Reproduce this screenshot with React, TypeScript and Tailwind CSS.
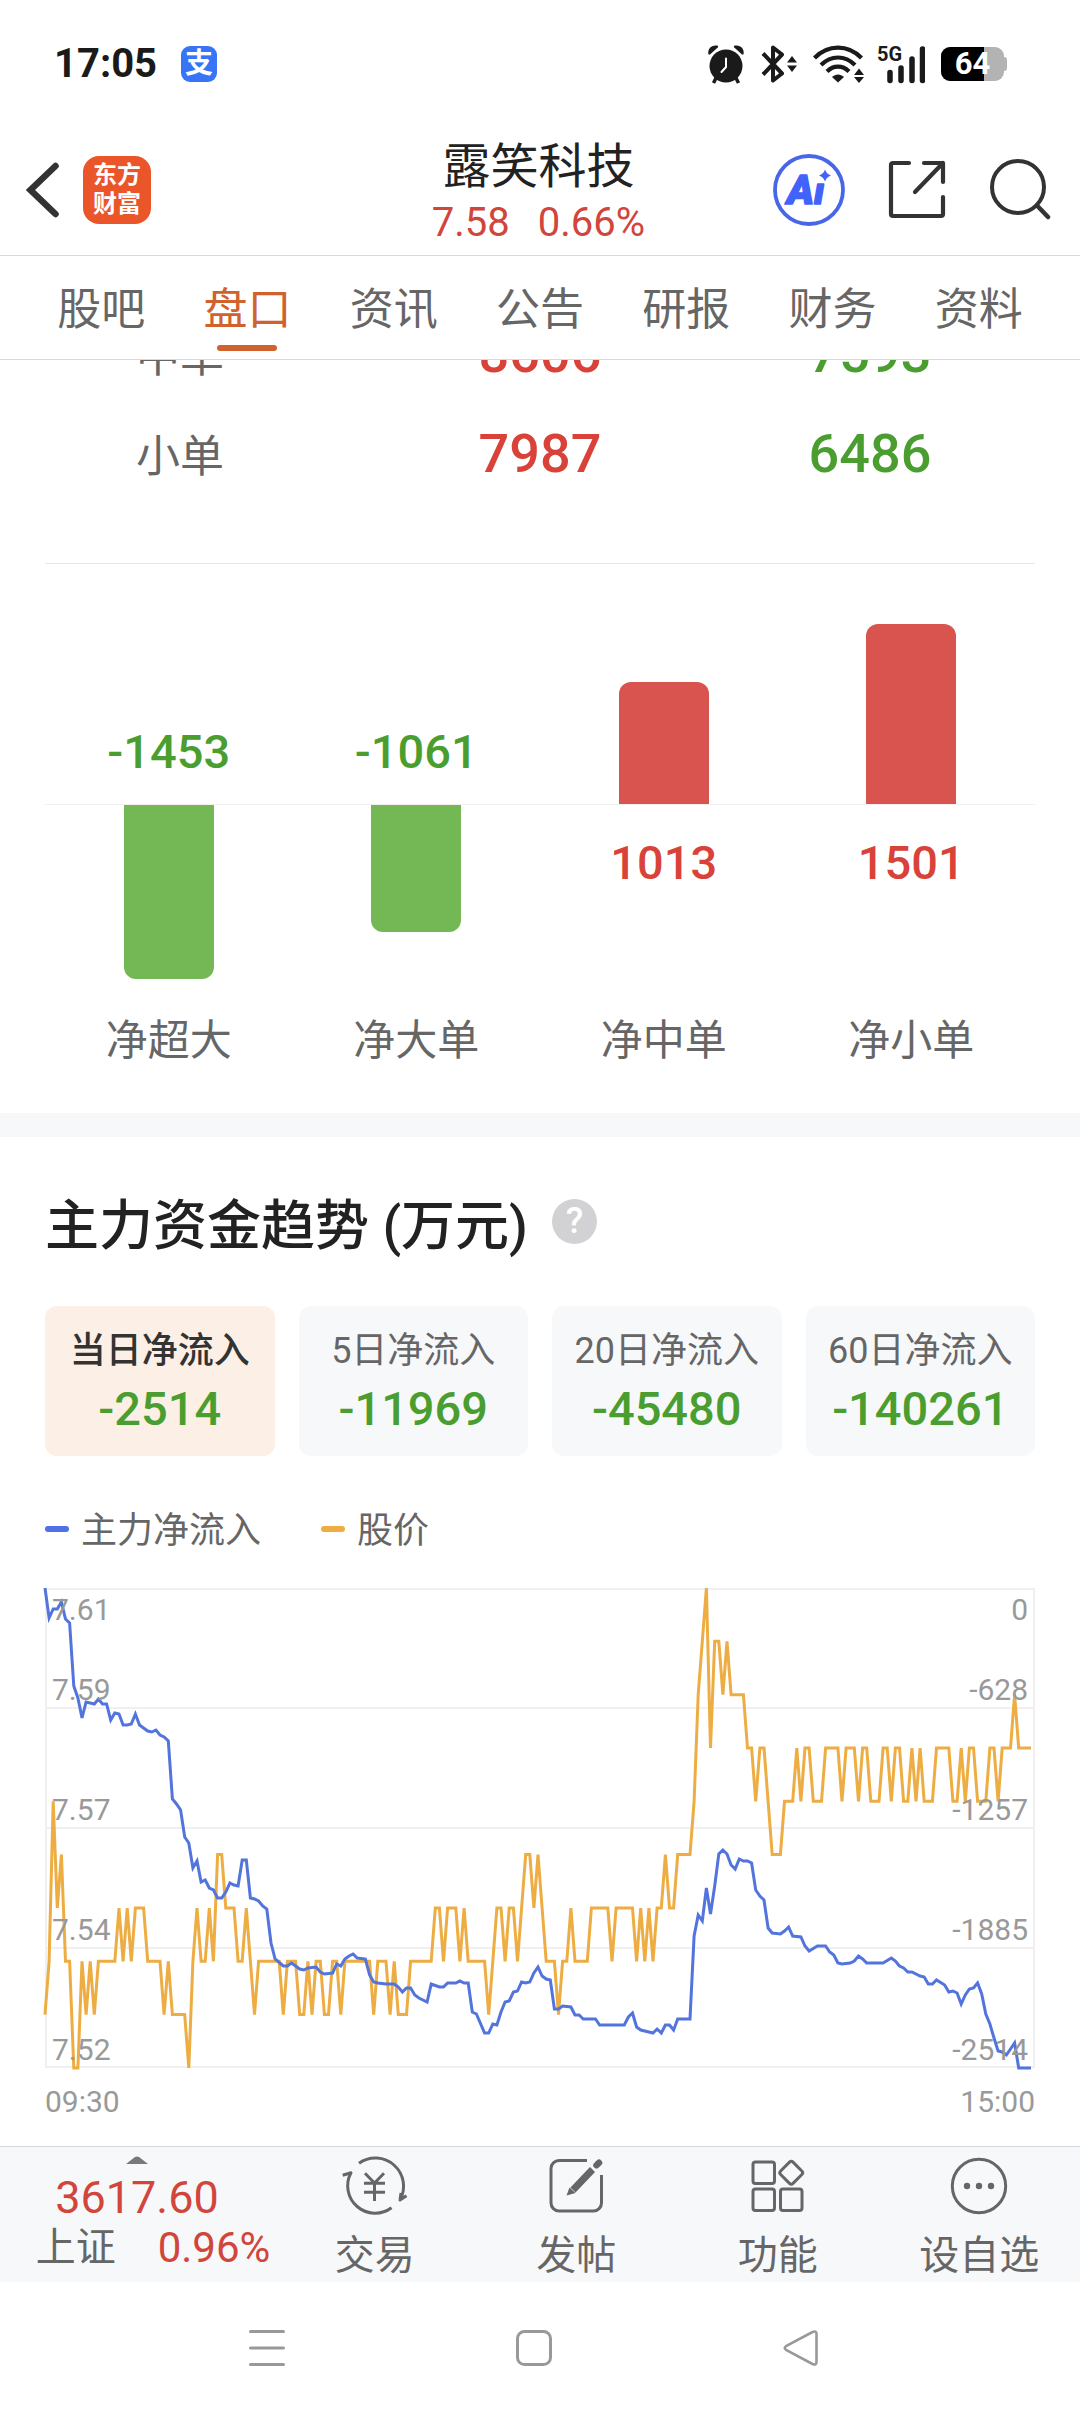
import React, { useState } from 'react';

const TABS = ['股吧', '盘口', '资讯', '公告', '研报', '财务', '资料'];

const ORDER_ROWS = [
    { label: '中单', inflow: 8606, outflow: 7593 },
    { label: '小单', inflow: 7987, outflow: 6486 },
];

const NET_BARS = [
    { label: '净超大', value: -1453 },
    { label: '净大单', value: -1061 },
    { label: '净中单', value: 1013 },
    { label: '净小单', value: 1501 },
];

const PERIODS = [
    { label: '当日净流入', value: '-2514' },
    { label: '5日净流入', value: '-11969' },
    { label: '20日净流入', value: '-45480' },
    { label: '60日净流入', value: '-140261' },
];

const PRICE_TICKS = ['7.61', '7.59', '7.57', '7.54', '7.52'];
const FLOW_TICKS = ['0', '-628', '-1257', '-1885', '-2514'];

// [minute, price level], level 0 = 7.52 and level 9 = 7.61
const PRICE: number[][] = [
    [0, 1], [1, 2], [2, 5], [3, 3], [4, 4], [5, 2], [6, 2], [7, 0], [8, 0], [9, 2], [10, 1], [11, 2], [12, 1], [13, 2],
    [17, 2], [18, 3], [19, 2], [20, 3], [21, 2], [22, 3], [24, 3], [25, 2], [28, 2], [29, 1], [30, 2], [31, 1], [34, 1],
    [35, 0], [36, 2], [37, 3], [38, 2], [39, 2], [40, 3], [41, 2], [42, 4], [43, 4], [44, 3], [46, 3], [47, 2], [48, 2],
    [49, 3], [50, 2], [51, 1], [52, 2], [57, 2], [58, 1], [59, 2], [61, 2], [62, 1], [63, 1], [64, 2], [65, 1], [66, 2],
    [67, 2], [68, 1], [69, 1], [70, 2], [71, 2], [72, 1], [73, 2], [79, 2], [80, 1], [81, 2], [83, 2], [84, 1], [85, 2],
    [86, 1], [88, 1], [89, 2], [94, 2], [95, 3], [96, 3], [97, 2], [98, 3], [100, 3], [101, 2], [102, 3], [103, 2],
    [107, 2], [108, 1], [109, 2], [110, 3], [111, 3], [112, 2], [113, 3], [114, 3], [115, 2], [116, 3], [117, 4],
    [118, 4], [119, 3], [120, 4], [121, 3], [122, 2], [124, 2], [125, 1], [126, 2], [127, 2], [128, 3], [129, 2],
    [132, 2], [133, 3], [137, 3], [138, 2], [139, 3], [143, 3], [144, 2], [145, 3], [146, 2], [147, 3], [148, 2],
    [149, 3], [150, 3], [151, 4], [152, 3], [153, 3], [154, 4], [157, 4], [158, 5], [159, 7], [160, 8], [161, 9],
    [162, 6], [163, 8], [164, 8], [165, 7], [166, 8], [167, 7], [170, 7], [171, 6], [172, 6], [173, 5], [174, 6],
    [175, 6], [176, 5], [177, 4], [179, 4], [180, 5], [182, 5], [183, 6], [184, 5], [185, 6], [186, 6], [187, 5],
    [189, 5], [190, 6], [193, 6], [194, 5], [195, 6], [197, 6], [198, 5], [199, 6], [200, 6], [201, 5], [203, 5],
    [204, 6], [205, 6], [206, 5], [207, 6], [208, 6], [209, 5], [210, 5], [211, 6], [212, 5], [213, 6], [214, 5],
    [216, 5], [217, 6], [220, 6], [221, 5], [222, 5], [223, 6], [224, 5], [225, 6], [226, 6], [227, 5], [229, 5],
    [230, 6], [231, 6], [232, 5], [233, 6], [235, 6], [236, 7], [237, 6], [240, 6],
];

// [minute, distance from the zero line], 480 = -2514
const FLOW: number[][] = [
    [0, 0], [1, 30], [2, 21], [3, 21], [4, 14], [5, 31], [6, 35], [7, 98], [8, 110], [9, 130], [10, 114], [12, 116],
    [13, 111], [14, 116], [15, 116], [16, 132], [17, 125], [18, 126], [19, 137], [20, 137], [21, 136], [22, 126],
    [23, 137], [25, 143], [26, 144], [27, 142], [28, 147], [29, 149], [30, 153], [31, 211], [32, 216], [33, 222],
    [34, 249], [35, 255], [36, 280], [37, 273], [38, 294], [39, 292], [40, 300], [41, 302], [42, 310], [43, 310],
    [44, 304], [45, 295], [46, 297], [47, 298], [48, 272], [49, 272], [50, 310], [51, 311], [52, 313], [53, 318],
    [54, 321], [55, 355], [56, 371], [58, 378], [59, 378], [60, 375], [61, 378], [62, 381], [63, 382], [64, 380],
    [66, 379], [67, 384], [68, 386], [70, 385], [71, 376], [72, 378], [73, 371], [74, 368], [75, 366], [76, 370],
    [78, 371], [79, 387], [80, 394], [81, 395], [83, 396], [85, 396], [86, 399], [87, 404], [88, 400], [89, 400],
    [90, 407], [91, 410], [93, 414], [94, 396], [96, 399], [97, 399], [98, 395], [100, 395], [101, 393], [102, 395],
    [103, 395], [104, 424], [105, 426], [107, 445], [108, 445], [109, 436], [110, 437], [111, 424], [112, 414],
    [113, 413], [114, 404], [115, 403], [116, 394], [117, 395], [118, 394], [119, 385], [120, 379], [121, 388],
    [122, 391], [123, 392], [124, 421], [125, 421], [126, 418], [128, 419], [129, 427], [130, 427], [131, 431],
    [134, 431], [135, 437], [141, 437], [142, 429], [143, 425], [144, 439], [145, 442], [148, 445], [149, 441],
    [150, 445], [151, 437], [152, 437], [153, 442], [154, 431], [157, 431], [158, 348], [159, 327], [160, 333],
    [161, 300], [162, 326], [163, 298], [164, 266], [165, 262], [166, 266], [167, 277], [168, 281], [169, 271],
    [170, 273], [171, 273], [172, 275], [173, 302], [174, 308], [175, 312], [176, 340], [177, 345], [179, 346],
    [180, 343], [181, 339], [182, 348], [184, 349], [185, 358], [186, 363], [188, 358], [190, 358], [191, 364],
    [192, 367], [193, 375], [194, 376], [196, 375], [197, 373], [198, 368], [199, 371], [200, 375], [204, 375],
    [206, 370], [207, 373], [208, 378], [209, 380], [210, 384], [211, 384], [213, 388], [214, 389], [215, 396],
    [216, 396], [217, 392], [219, 397], [220, 404], [221, 403], [222, 405], [223, 416], [224, 407], [225, 401],
    [226, 400], [227, 395], [228, 406], [229, 426], [230, 436], [231, 450], [232, 463], [233, 464], [234, 467],
    [235, 461], [236, 455], [237, 480], [240, 480],
];

const STEP = 986 / 240;
const pricePoints = PRICE.map(([t, level]) => `${(t * STEP).toFixed(1)},${((9 - level) * 53.33).toFixed(1)}`).join(' ');
const flowPoints = FLOW.map(([t, y]) => `${(t * STEP).toFixed(1)},${y}`).join(' ');

function StatusBar() {
    return (
        <div className="flex h-[124px] items-center justify-between pl-[54px] pr-[73px] pt-1">
            <div className="flex items-center gap-6">
                <span className="text-[40px] font-bold leading-[48px] text-[#1a1a1a]">17:05</span>
                <span className="flex size-9 items-center justify-center rounded-[9px] bg-[#3875f6] text-[28px] font-bold leading-9 text-white">
                    支
                </span>
            </div>
            <div className="flex items-center text-[#1a1a1a]">
                <svg className="mr-4 h-10 w-[38px]" viewBox="0 0 38 40" fill="currentColor">
                    <circle cx="19" cy="22" r="16.5" />
                    <path d="M1.500 10.500C.2 4.500 5 .2 11 1.800L11 3.200L3 10.500ZM36.500 10.500C37.800 4.500 33 .2 27 1.800L27 3.200L35 10.500Z" />
                    <path d="M9 34L6.500 39M29 34L31.500 39" stroke="currentColor" strokeWidth="3.500" />
                    <path d="M19 14.500V23L14.500 28" fill="none" stroke="#fff" strokeWidth="2" strokeLinecap="round" />
                </svg>
                <svg className="mr-4 h-10 w-9" viewBox="0 0 36 40" fill="none">
                    <path d="M2 9.500L21 29.500L12 36.500V3.500L21 10.500L2 30.500" stroke="currentColor" strokeWidth="4" strokeLinejoin="round" />
                    <path d="M31 12L36 18.500H26ZM31 28L36 21.500H26Z" fill="currentColor" />
                </svg>
                <svg className="mr-3 h-10 w-[52px]" viewBox="0 0 52 40" fill="none" stroke="currentColor" strokeWidth="4.200">
                    <path d="M1.500 14C15 .2 35 .2 48.500 14M8 21C18 11 32 11 42 21M14 27.500C20.500 21 29.500 21 36 27.500" />
                    <path d="M19 33C22.500 29.500 27.500 29.500 31 33L25 38.500Z" fill="currentColor" stroke="none" />
                    <path d="M46 24.500L51 31H41ZM46 39L51 33H41Z" fill="currentColor" stroke="none" />
                </svg>
                <div className="relative mr-4 h-10 w-12">
                    <span className="absolute left-0 top-0 text-[20px] font-bold leading-[20px]">5G</span>
                    <svg className="size-full" viewBox="0 0 48 40" stroke="currentColor" strokeWidth="5.500" strokeLinecap="round">
                        <path d="M13 28.500V36.500M24 24V36.500M35 15V36.500M45.500 5V36.500" />
                    </svg>
                </div>
                <div className="flex items-center">
                    <div className="relative flex h-[34px] w-[63px] items-center justify-center rounded-[9px] bg-[#b3b3b3]">
                        <div className="absolute inset-y-0 left-0 w-[43px] rounded-l-[9px] bg-black" />
                        <span className="relative text-[31px] font-bold leading-[34px] text-white">64</span>
                    </div>
                    <div className="h-3.5 w-[3px] rounded-r-full bg-[#b3b3b3]" />
                </div>
            </div>
        </div>
    );
}

function Header() {
    return (
        <header className="grid h-[132px] grid-cols-[1fr_auto_1fr] items-center border-b border-[#d9d9d9] pl-[26px] pr-[29px]">
            <div className="flex items-center gap-[23px]">
                <button aria-label="返回">
                    <svg className="h-[58px] w-[34px]" viewBox="0 0 34 58" fill="none" stroke="#333" strokeWidth="6.500" strokeLinecap="round">
                        <path d="M29.500 5L4.500 29L29.500 53" strokeLinejoin="miter" />
                    </svg>
                </button>
                <a href="#home" className="flex h-[68px] w-[68px] flex-col items-center justify-center rounded-2xl bg-[#ea5529] text-[24px] font-bold leading-[29px] text-white">
                    <span>东方</span>
                    <span>财富</span>
                </a>
            </div>
            <div className="flex flex-col items-center pt-1.5">
                <h1 className="text-[48px] leading-[60px] text-[#222]">露笑科技</h1>
                <p className="flex gap-7 text-[40px] leading-[52px] text-[#d1453b]">
                    <span>7.58</span>
                    <span>0.66%</span>
                </p>
            </div>
            <div className="flex items-center justify-end gap-[42px]">
                <button aria-label="Ai">
                    <svg className="size-[72px]" viewBox="0 0 72 72">
                        <circle cx="36" cy="36" r="34" fill="none" stroke="#4766e8" strokeWidth="3.800" />
                        <text x="14" y="50" fontSize="41" fontWeight="900" fontStyle="italic" fill="#4263fa" stroke="#4263fa" strokeWidth="1.500" strokeLinejoin="round">
                            A<tspan fontSize="37">ı</tspan>
                        </text>
                        <path d="M52 15.500Q53.500 20 58 21.500Q53.500 23 52 27.500Q50.500 23 46 21.500Q50.500 20 52 15.500Z" fill="#4263fa" />
                    </svg>
                </button>
                <button aria-label="分享">
                    <svg className="size-[60px]" viewBox="0 0 60 60" fill="none" stroke="#333" strokeWidth="4.200" strokeLinecap="round" strokeLinejoin="round">
                        <path d="M22 3H6Q4 3 4 5V54Q4 56 6 56H54Q56 56 56 54V37M37 3H56V22M56 3L28 32" />
                    </svg>
                </button>
                <button aria-label="搜索">
                    <svg className="size-[62px]" viewBox="0 0 62 62" fill="none" stroke="#333" strokeWidth="4" strokeLinecap="round">
                        <circle cx="29" cy="28" r="26" />
                        <path d="M48 46.500L59 58" strokeWidth="4.500" />
                    </svg>
                </button>
            </div>
        </header>
    );
}

function TabBar() {
    const [active, setActive] = useState('盘口');

    return (
        <nav className="flex h-[104px] border-b border-[#d9d9d9] px-7">
            {TABS.map(tab => (
                <button
                    key={tab}
                    onClick={() => setActive(tab)}
                    className={`relative flex flex-1 items-center justify-center pt-1 text-[44px] leading-[60px] ${tab === active ? 'text-[#d0622d]' : 'text-[#666]'}`}
                >
                    {tab}
                    {tab === active && <span className="absolute bottom-2 h-1.5 w-[60px] rounded-full bg-[#d0622d]" />}
                </button>
            ))}
        </nav>
    );
}

function OrderTable() {
    return (
        <div className="overflow-hidden px-[45px] pb-[59px]">
            {/* first row is half scrolled under the tab bar */}
            <table className="-mt-14 w-full table-fixed text-center">
                <tbody>
                    {ORDER_ROWS.map(row => (
                        <tr key={row.label} className="h-[100px]">
                            <th scope="row" className="pr-[60px] pt-1.5 text-[44px] font-normal leading-[60px] text-[#666]">{row.label}</th>
                            <td className="text-[54px] font-medium leading-[60px] text-[#d94238]">{row.inflow}</td>
                            <td className="text-[54px] font-medium leading-[60px] text-[#4a9e30]">{row.outflow}</td>
                        </tr>
                    ))}
                </tbody>
            </table>
        </div>
    );
}

function NetBars() {
    return (
        <div className="mx-[45px] grid grid-cols-4 border-t border-[#e6e6e6] pb-12">
            {NET_BARS.map(({ label, value }) => {
                const up = value > 0;
                const bar = (
                    <div
                        className={`w-[90px] ${up ? 'rounded-t-xl bg-[#d9544f]' : 'rounded-b-xl bg-[#74b856]'}`}
                        style={{ height: Math.abs(value) * 0.12 }}
                    />
                );
                return (
                    <div key={label} className="flex flex-col items-center">
                        <div className="flex h-60 w-full flex-col items-center justify-end">
                            {up ? bar : <span className="pb-7 text-[47px] font-medium leading-[48px] text-[#4a9e30]">{value}</span>}
                        </div>
                        <div className="flex h-[213px] w-full flex-col items-center border-t border-[#f0f0f0]">
                            {up ? <span className="pt-[34px] text-[47px] font-medium leading-[48px] text-[#d94238]">{value}</span> : bar}
                        </div>
                        <span className="text-[42px] leading-[48px] text-[#666]">{label}</span>
                    </div>
                );
            })}
        </div>
    );
}

function TrendChart() {
    return (
        <div className="mt-[33px]">
            <div className="relative h-[480px]">
                <svg className="size-full overflow-visible" viewBox="0 0 990 480" preserveAspectRatio="none" fill="none">
                    <path d="M1 1H989V479H1ZM0 120H990M0 240H990M0 360H990" stroke="#f0f0f0" strokeWidth="2" />
                    <polyline points={pricePoints} stroke="#edad43" strokeWidth="3" />
                    <polyline points={flowPoints} stroke="#5274dc" strokeWidth="3" />
                </svg>
                <div className="absolute inset-0 grid grid-rows-4 px-[7px] text-[30px] leading-[36px] text-[#999]">
                    {PRICE_TICKS.slice(1).map((tick, i) => (
                        <div key={tick} className="flex flex-col justify-between">
                            <div className="flex justify-between pt-1">
                                {i === 0 && <span>{PRICE_TICKS[0]}</span>}
                                {i === 0 && <span>{FLOW_TICKS[0]}</span>}
                            </div>
                            <div className="flex justify-between">
                                <span>{tick}</span>
                                <span>{FLOW_TICKS[i + 1]}</span>
                            </div>
                        </div>
                    ))}
                </div>
            </div>
            <div className="flex justify-between pt-4 text-[30px] leading-[36px] text-[#999]">
                <span>09:30</span>
                <span>15:00</span>
            </div>
        </div>
    );
}

function TrendSection() {
    const [period, setPeriod] = useState(0);

    return (
        <section className="border-t-[24px] border-[#f7f8fa] px-[45px] pb-[26px]">
            <div className="flex items-center gap-6 pt-14">
                <h2 className="text-[54px] font-medium leading-[68px] text-[#222]">主力资金趋势 (万元)</h2>
                <button aria-label="说明" className="mb-3 flex size-[45px] items-center justify-center rounded-full bg-[#d2d2d4] text-[36px] font-medium leading-[45px] text-white">
                    ?
                </button>
            </div>
            <div className="mt-[45px] grid grid-cols-4 gap-6">
                {PERIODS.map((item, i) => (
                    <button
                        key={item.label}
                        onClick={() => setPeriod(i)}
                        className={`flex h-[150px] flex-col items-center justify-center rounded-xl ${i === period ? 'bg-[#fcefe6]' : 'bg-[#f7f8fa]'}`}
                    >
                        <span className={`whitespace-nowrap text-[36px] leading-[56px] ${i === period ? 'font-medium text-[#333]' : 'text-[#666]'}`}>
                            {item.label}
                        </span>
                        <span className="text-[47px] font-medium leading-[60px] text-[#4a9e30]">{item.value}</span>
                    </button>
                ))}
            </div>
            <div className="mt-[51px] flex gap-[60px] text-[36px] leading-[48px] text-[#666]">
                <span className="flex items-center gap-3">
                    <i className="mb-1 h-1.5 w-6 rounded-sm bg-[#4f70e6]" />
                    主力净流入
                </span>
                <span className="flex items-center gap-3">
                    <i className="mb-1 h-1.5 w-6 rounded-sm bg-[#edad43]" />
                    股价
                </span>
            </div>
            <TrendChart />
        </section>
    );
}

const ACTIONS = [
    {
        label: '交易',
        icon: (
            <svg className="h-[60px] w-[68px]" viewBox="0 0 68 60" fill="none" stroke="#666" strokeWidth="3" strokeLinejoin="round">
                <path d="M18 7.300A28.200 28.200 0 0 1 59 44L65.500 39.700M59 44L60 37M50.500 51.700A27.400 27.400 0 0 1 10 16.700L1.700 19.300" />
                <path d="M24 17.300L33.500 27L43 17.300M33.500 27V45M23 27.300H44M23 36.300H44" />
            </svg>
        ),
    },
    {
        label: '发帖',
        icon: (
            <svg className="size-[60px]" viewBox="0 0 60 60" fill="none" stroke="#666" strokeWidth="3">
                <path d="M41 4.500H13A8 8 0 0 0 5 12.500V47A8 8 0 0 0 13 55H47.500A8 8 0 0 0 55.500 47V19" />
                <path d="M27 34L46.500 13.500" strokeWidth="7" />
                <path d="M20.500 39.500L23.500 31.500L29.500 37Z" fill="#666" stroke="none" />
                <path d="M50.500 9.300L53 6.800" strokeWidth="6.500" strokeLinecap="round" />
            </svg>
        ),
    },
    {
        label: '功能',
        icon: (
            <svg className="size-[60px]" viewBox="0 0 60 60" fill="none" stroke="#666" strokeWidth="3">
                <rect x="5" y="6" width="21.500" height="21.500" rx="2.500" />
                <rect x="5" y="33" width="21.500" height="21.500" rx="2.500" />
                <rect x="32.500" y="33" width="21.500" height="21.500" rx="2.500" />
                <rect x="34.500" y="8" width="17.500" height="17.500" rx="2.500" transform="rotate(45 43.250 16.750)" />
            </svg>
        ),
    },
    {
        label: '设自选',
        icon: (
            <svg className="size-[60px]" viewBox="0 0 60 60" fill="#666">
                <circle cx="30" cy="30" r="26.700" fill="none" stroke="#666" strokeWidth="3" />
                <circle cx="18" cy="30" r="3.200" />
                <circle cx="30" cy="30" r="3.200" />
                <circle cx="42" cy="30" r="3.200" />
            </svg>
        ),
    },
];

function ActionBar() {
    return (
        <footer className="flex border-t border-[#d3d6da] bg-[#f7f8fa]">
            <a href="#index" className="flex w-[274px] flex-col items-center pt-[9px]">
                <svg className="h-2 w-[22px]" viewBox="0 0 22 8" fill="#77797d">
                    <path d="M0 8L9 1Q11 0 13 1L22 8Z" />
                </svg>
                <span className="mt-2.5 text-[45px] leading-[48px] text-[#d1453b]">3617.60</span>
                <span className="flex gap-[42px] pl-8 pt-0.5 leading-[48px]">
                    <span className="text-[40px] text-[#666]">上证</span>
                    <span className="text-[42px] text-[#d1453b]">0.96%</span>
                </span>
            </a>
            {ACTIONS.map(({ label, icon }) => (
                <button key={label} className="flex flex-1 flex-col items-center pb-0.5 pt-[9px] text-[40px] leading-[48px] text-[#666]">
                    {icon}
                    <span className="mt-4">{label}</span>
                </button>
            ))}
        </footer>
    );
}

function SystemNav() {
    return (
        <div className="flex items-center justify-center gap-[227px] pb-[46px] pr-3 pt-[46px]">
            <button aria-label="最近任务">
                <svg className="size-10" viewBox="0 0 40 40" stroke="#999" strokeWidth="3" strokeLinecap="round">
                    <path d="M3.500 3.500H36.500M3.500 20H36.500M3.500 36.500H36.500" />
                </svg>
            </button>
            <button aria-label="主屏幕">
                <svg className="size-10" viewBox="0 0 40 40" fill="none" stroke="#999" strokeWidth="3">
                    <rect x="3.500" y="3.500" width="33" height="33" rx="7" />
                </svg>
            </button>
            <button aria-label="后退">
                <svg className="size-10" viewBox="0 0 40 40" fill="none" stroke="#999" strokeWidth="2.600">
                    <path d="M5 18.200L31.500 4Q35.500 2.500 35.500 6V34Q35.500 37.500 31.500 36L5 21.800Q2.500 20 5 18.200Z" />
                </svg>
            </button>
        </div>
    );
}

export default function App() {
    return (
        <div className="min-h-screen bg-white font-['Roboto','Noto_Sans_CJK_SC',sans-serif]">
            <StatusBar />
            <Header />
            <TabBar />
            <main>
                <OrderTable />
                <NetBars />
                <TrendSection />
            </main>
            <ActionBar />
            <SystemNav />
        </div>
    );
}
